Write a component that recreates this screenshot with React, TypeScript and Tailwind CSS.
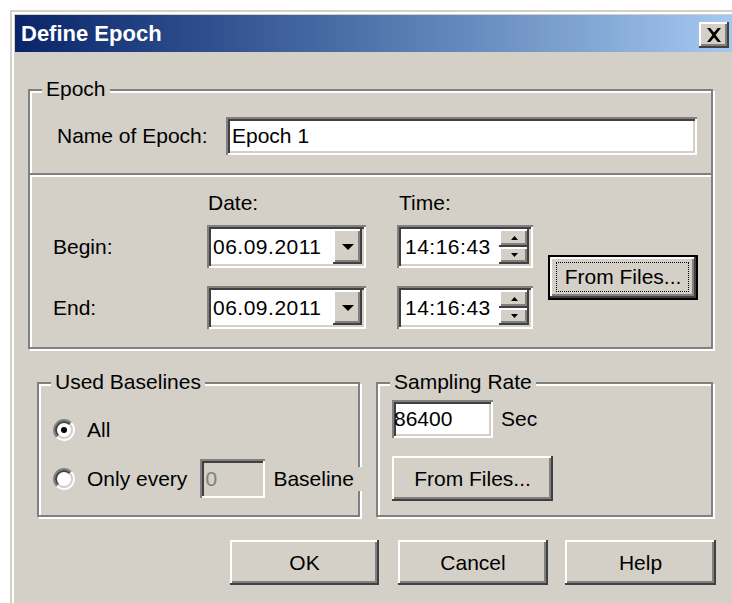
import React from 'react';

// classic 3D edges
const raised = 'shadow-[inset_-2px_-2px_0_#404040,inset_2px_2px_0_#ffffff,inset_-4px_-4px_0_#808080]';
const sunken = 'shadow-[inset_2px_2px_0_#808080,inset_-2px_-2px_0_#ffffff,inset_4px_4px_0_#404040,inset_-4px_-4px_0_#d4d0c8]';
const etched = 'border-2 border-[#808080] shadow-[inset_2px_2px_0_#ffffff,2px_2px_0_#ffffff]';

const GroupBox: React.FC<{ label: string; className?: string; children: React.ReactNode }> = ({
  label,
  className = '',
  children,
}) => (
  <div className={`relative ${etched} ${className}`}>
    <span className="absolute -top-[14px] left-[12px] bg-[#d4d0c8] px-[4px] whitespace-nowrap">{label}</span>
    {children}
  </div>
);

const Button: React.FC<{ className?: string; children: React.ReactNode }> = ({ className = '', children }) => (
  <div className={`flex h-[45px] shrink-0 items-center justify-center bg-[#d4d0c8] ${raised} ${className}`}>
    {children}
  </div>
);

const Radio: React.FC<{ checked?: boolean }> = ({ checked }) => (
  <svg width="22" height="22" viewBox="0 0 22 22" className="shrink-0">
    <circle cx="11" cy="11" r="8" fill="#fff" />
    <path d="M3.93 18.07A10 10 0 0 1 18.07 3.93" stroke="#808080" strokeWidth="2" fill="none" />
    <path d="M18.07 3.93A10 10 0 0 1 3.93 18.07" stroke="#fff" strokeWidth="2" fill="none" />
    <path d="M5.34 16.66A8 8 0 0 1 16.66 5.34" stroke="#404040" strokeWidth="2" fill="none" />
    <path d="M16.66 5.34A8 8 0 0 1 5.34 16.66" stroke="#d4d0c8" strokeWidth="2" fill="none" />
    {checked && <circle cx="11" cy="11" r="3" fill="#000" />}
  </svg>
);

const DateCombo: React.FC<{ value: string }> = ({ value }) => (
  <div className={`flex h-[43px] w-[159px] shrink-0 bg-white p-[4px] ${sunken}`}>
    <span className="flex flex-1 items-center pl-[2px] tracking-[0.5px]">{value}</span>
    <div className={`flex w-[29px] items-center justify-center bg-[#d4d0c8] ${raised}`}>
      <svg width="12" height="6" viewBox="0 0 12 6">
        <path d="M0 0h12L6 6z" fill="#000" />
      </svg>
    </div>
  </div>
);

const TimeSpin: React.FC<{ value: string }> = ({ value }) => (
  <div className={`ml-[31px] flex h-[43px] w-[136px] shrink-0 bg-white p-[4px] ${sunken}`}>
    <span className="flex flex-1 items-center pl-[4px] tracking-[0.5px]">{value}</span>
    <div className="flex w-[30px] flex-col">
      <div className={`flex flex-1 items-center justify-center bg-[#d4d0c8] ${raised}`}>
        <svg width="7" height="4" viewBox="0 0 7 4">
          <path d="M0 4h7L3.5 0z" fill="#000" />
        </svg>
      </div>
      <div className={`flex flex-1 items-center justify-center bg-[#d4d0c8] ${raised}`}>
        <svg width="7" height="4" viewBox="0 0 7 4">
          <path d="M0 0h7L3.5 4z" fill="#000" />
        </svg>
      </div>
    </div>
  </div>
);

const RangeRow: React.FC<{ label: string; className?: string }> = ({ label, className = '' }) => (
  <div className={`flex h-[43px] items-center ${className}`}>
    <span className="w-[154px] shrink-0">{label}</span>
    <DateCombo value="06.09.2011" />
    <TimeSpin value="14:16:43" />
  </div>
);

export default function App() {
  return (
    <div className="h-[603px] w-[732px] overflow-hidden bg-white pl-[10px] pt-[10px] font-['Liberation_Sans',Arial,sans-serif] text-[21px] leading-[24px] text-black">
      <div className="h-[600px] w-[726px] bg-[#d4d0c8] pl-[5px] pt-[5px] shadow-[inset_2px_2px_0_#d4d0c8,inset_4px_4px_0_#ffffff]">
        {/* caption */}
        <div className="flex h-[37px] items-center bg-linear-to-r from-[#0a246a] to-[#a6caf0] pl-[6px] pr-[7px]">
          <span className="flex-1 text-[22px] font-bold text-white">Define Epoch</span>
          <div className={`mt-[3px] flex h-[26px] w-[30px] items-center justify-center bg-[#d4d0c8] ${raised}`}>
            <svg width="16" height="14" viewBox="0 0 16 14">
              <path d="M1 0h3.2L8 4.6 11.8 0H15L9.6 7 15 14h-3.2L8 9.4 4.2 14H1l5.4-7z" fill="#000" />
            </svg>
          </div>
        </div>

        {/* Epoch */}
        <GroupBox label="Epoch" className="ml-[13px] mt-[37px] w-[685px]">
          <div className="flex items-center pl-[27px] pr-[14px] pt-[26px]">
            <span className="w-[169px] shrink-0">Name of Epoch:</span>
            <div className={`flex h-[38px] flex-1 items-center bg-white pl-[6px] ${sunken}`}>Epoch 1</div>
          </div>
          <div className="mt-[18px] h-[4px] border-b-2 border-t-2 border-b-white border-t-[#808080]" />
          <div className="flex pb-[18px] pl-[23px] pt-[14px]">
            <div className="flex flex-col">
              <div className="flex h-[24px]">
                <span className="ml-[154px] w-[159px] pl-[1px]">Date:</span>
                <span className="ml-[31px] pl-[2px]">Time:</span>
              </div>
              <RangeRow label="Begin:" className="mt-[10px]" />
              <RangeRow label="End:" className="mt-[18px]" />
            </div>
            <div className="ml-[15px] mt-[34px] flex h-[104px] items-center">
              <div className={`relative flex h-[45px] w-[150px] items-center justify-center border-2 border-black bg-[#d4d0c8] ${raised}`}>
                From Files...
                <span className="absolute bottom-[6px] left-[6px] right-[7px] top-[5px] border border-dotted border-black" />
              </div>
            </div>
          </div>
        </GroupBox>

        {/* baselines + sampling */}
        <div className="ml-[22px] mt-[33px] flex gap-[16px]">
          <GroupBox label="Used Baselines" className="w-[323px] pb-[17px] pl-[14px] pt-[31px]">
            <div className="flex h-[30px] items-center">
              <Radio checked />
              <span className="ml-[12px]">All</span>
            </div>
            <div className="mt-[14px] flex h-[39px] items-center whitespace-nowrap">
              <Radio />
              <span className="ml-[12px] shrink-0">Only every</span>
              <div className={`ml-[13px] flex h-[39px] w-[65px] shrink-0 items-center bg-[#d4d0c8] pl-[5px] text-[#808080] ${sunken}`}>
                0
              </div>
              <span className="relative ml-[8px] shrink-0 bg-[#d4d0c8] pr-[9px]">Baseline</span>
            </div>
          </GroupBox>

          <GroupBox label="Sampling Rate" className="w-[337px] pb-[14px] pl-[14px] pt-[16px]">
            <div className="flex items-center">
              <div className={`flex h-[38px] w-[101px] items-center bg-white pl-[2px] ${sunken}`}>86400</div>
              <span className="ml-[8px]">Sec</span>
            </div>
            <Button className="mt-[18px] w-[161px]">From Files...</Button>
          </GroupBox>
        </div>

        {/* dialog buttons */}
        <div className="mt-[23px] flex pl-[215px]">
          <Button className="w-[149px]">OK</Button>
          <Button className="ml-[19px] w-[150px]">Cancel</Button>
          <Button className="ml-[17px] w-[151px]">Help</Button>
        </div>
      </div>
    </div>
  );
}
